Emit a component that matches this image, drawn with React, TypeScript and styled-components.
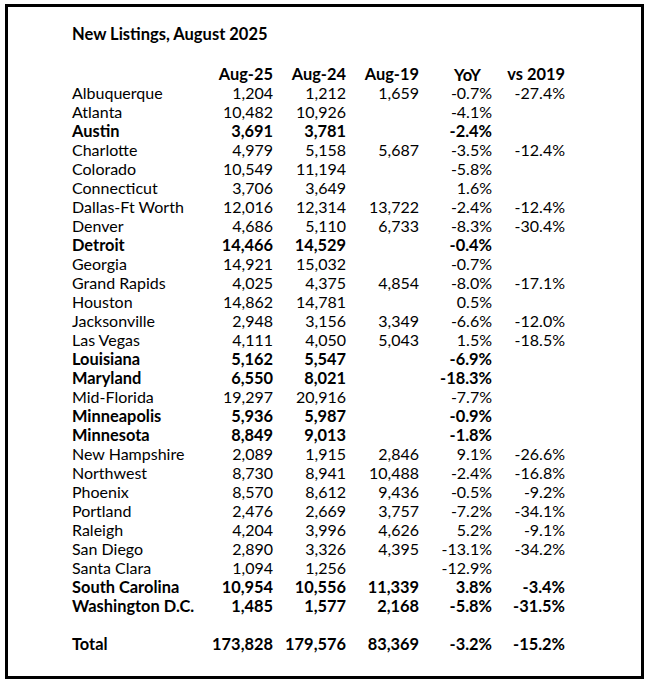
import React from "react";
import styled, { createGlobalStyle } from "styled-components";

const Global = createGlobalStyle`
  html, body { margin: 0; padding: 0; background: #fff; }
  body { font-family: Lato, "Open Sans", sans-serif; color: #000; }
`;

const Frame = styled.div`
  box-sizing: border-box;
  margin: 4px 0 0 5px;
  width: 639px;
  height: 675px;
  border: 3px solid #000;
  padding: 18px 0 0 64px;
`;

const Title = styled.div`
  font-size: 16.5px;
  font-weight: 700;
  line-height: 19px;
  height: 19px;
  margin-bottom: 20px;
`;

const Grid = styled.div`
  display: grid;
  grid-template-columns: 128px repeat(5, 73px);
  grid-auto-rows: 19px;
  font-size: 16px;
  line-height: 19px;
`;

const Cell = styled.div<{ $bold?: boolean; $left?: boolean }>`
  font-weight: ${(p) => (p.$bold ? 700 : 400)};
  font-size: ${(p) => (p.$bold ? "16.4px" : "16px")};
  text-align: ${(p) => (p.$left ? "left" : "right")};
  white-space: nowrap;
`;

const DroppedHead = styled(Cell)`
  box-sizing: border-box;
  height: 19px;
  line-height: 16px;
  padding: 3px 11px 0 0;
`;

const Spacer = styled.div`
  grid-column: 1 / -1;
  height: 23px;
`;

type Row = [string, string, string, string, string, string, boolean];

const rows: Row[] = [
  ["Albuquerque", "1,204", "1,212", "1,659", "-0.7%", "-27.4%", false],
  ["Atlanta", "10,482", "10,926", "", "-4.1%", "", false],
  ["Austin", "3,691", "3,781", "", "-2.4%", "", true],
  ["Charlotte", "4,979", "5,158", "5,687", "-3.5%", "-12.4%", false],
  ["Colorado", "10,549", "11,194", "", "-5.8%", "", false],
  ["Connecticut", "3,706", "3,649", "", "1.6%", "", false],
  ["Dallas-Ft Worth", "12,016", "12,314", "13,722", "-2.4%", "-12.4%", false],
  ["Denver", "4,686", "5,110", "6,733", "-8.3%", "-30.4%", false],
  ["Detroit", "14,466", "14,529", "", "-0.4%", "", true],
  ["Georgia", "14,921", "15,032", "", "-0.7%", "", false],
  ["Grand Rapids", "4,025", "4,375", "4,854", "-8.0%", "-17.1%", false],
  ["Houston", "14,862", "14,781", "", "0.5%", "", false],
  ["Jacksonville", "2,948", "3,156", "3,349", "-6.6%", "-12.0%", false],
  ["Las Vegas", "4,111", "4,050", "5,043", "1.5%", "-18.5%", false],
  ["Louisiana", "5,162", "5,547", "", "-6.9%", "", true],
  ["Maryland", "6,550", "8,021", "", "-18.3%", "", true],
  ["Mid-Florida", "19,297", "20,916", "", "-7.7%", "", false],
  ["Minneapolis", "5,936", "5,987", "", "-0.9%", "", true],
  ["Minnesota", "8,849", "9,013", "", "-1.8%", "", true],
  ["New Hampshire", "2,089", "1,915", "2,846", "9.1%", "-26.6%", false],
  ["Northwest", "8,730", "8,941", "10,488", "-2.4%", "-16.8%", false],
  ["Phoenix", "8,570", "8,612", "9,436", "-0.5%", "-9.2%", false],
  ["Portland", "2,476", "2,669", "3,757", "-7.2%", "-34.1%", false],
  ["Raleigh", "4,204", "3,996", "4,626", "5.2%", "-9.1%", false],
  ["San Diego", "2,890", "3,326", "4,395", "-13.1%", "-34.2%", false],
  ["Santa Clara", "1,094", "1,256", "", "-12.9%", "", false],
  ["South Carolina", "10,954", "10,556", "11,339", "3.8%", "-3.4%", true],
  ["Washington D.C.", "1,485", "1,577", "2,168", "-5.8%", "-31.5%", true],
];

const total: Row = ["Total", "173,828", "179,576", "83,369", "-3.2%", "-15.2%", true];

const renderRow = (r: Row) => (
  <React.Fragment key={r[0]}>
    <Cell $left $bold={r[6]}>{r[0]}</Cell>
    {r.slice(1, 6).map((v, i) => (
      <Cell key={i} $bold={r[6]}>{v as string}</Cell>
    ))}
  </React.Fragment>
);

export default function App() {
  return (
    <>
      <Global />
      <Frame>
        <Title>New Listings, August 2025</Title>
        <Grid>
          <Cell $left />
          <Cell $bold>Aug-25</Cell>
          <Cell $bold>Aug-24</Cell>
          <Cell $bold>Aug-19</Cell>
          <DroppedHead $bold>YoY</DroppedHead>
          <Cell $bold>vs 2019</Cell>
          {rows.map(renderRow)}
          <Spacer />
          {renderRow(total)}
        </Grid>
      </Frame>
    </>
  );
}
